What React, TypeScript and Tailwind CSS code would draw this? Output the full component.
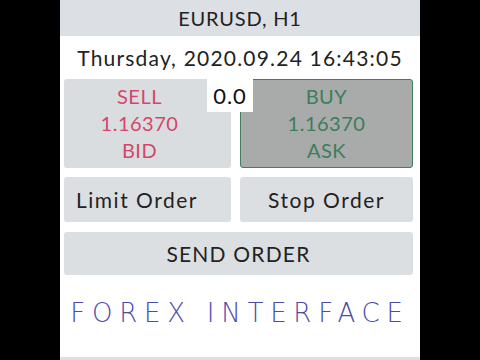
import React from "react";

const font = { fontFamily: "Lato, 'Open Sans', sans-serif" };

function PriceButton({
  side,
  price,
  label,
  className,
}: {
  side: string;
  price: string;
  label: string;
  className: string;
}) {
  return (
    <div
      className={`flex flex-col items-center justify-center rounded-[3px] text-[20px] leading-[27px] tracking-[0.5px] ${className}`}
    >
      <span>{side}</span>
      <span>{price}</span>
      <span>{label}</span>
    </div>
  );
}

export default function App() {
  return (
    <div className="flex h-[360px] w-[480px] justify-center bg-black" style={font}>
      <div className="flex w-[360px] flex-col bg-white text-[#222]">
        <div className="flex h-[36px] items-center justify-center bg-[#dcdfe3] text-[20px] tracking-[0.8px]">
          EURUSD, H1
        </div>
        <div className="flex h-[43px] items-center justify-center text-[21px] tracking-[1.2px]">
          Thursday, 2020.09.24 16:43:05
        </div>

        <div className="relative flex gap-[9px] pl-[4px] pr-[7px]">
          <PriceButton
            side="SELL"
            price="1.16370"
            label="BID"
            className="h-[89px] w-[167px] bg-[#dadde0] pr-[16px] text-[#d2486a]"
          />
          <PriceButton
            side="BUY"
            price="1.16370"
            label="ASK"
            className="h-[89px] w-[173px] border border-[#3f7f60] bg-[#a9aaaa] text-[#3d7d5c]"
          />
          <div className="absolute left-[147px] top-0 flex h-[33px] w-[46px] items-center justify-center bg-white text-[22px] tracking-[1px] text-[#111]">
            0.0
          </div>
        </div>

        <div className="mt-[9px] flex gap-[9px] pl-[4px] pr-[7px] text-[21px] tracking-[1.5px]">
          <div className="flex h-[45px] w-[167px] items-center rounded-[3px] bg-[#dcdfe2] pl-[12px]">
            Limit Order
          </div>
          <div className="flex h-[45px] w-[173px] items-center justify-center rounded-[3px] bg-[#dcdfe2]">
            Stop Order
          </div>
        </div>

        <div className="ml-[4px] mr-[7px] mt-[10px] flex h-[43px] items-center justify-center rounded-[3px] bg-[#dcdfe2] text-[21px] tracking-[1.2px]">
          SEND ORDER
        </div>

        <div className="flex flex-1 items-center justify-center pb-[6px]">
          <span
            className="text-[26px] font-light tracking-[0.26em] text-[#4b4ba8]"
            style={{ fontFamily: "'DejaVu Sans', sans-serif" }}
          >
            FOREX INTERFACE
          </span>
        </div>
        <div className="h-[3px] bg-[#dcdfe3]" />
      </div>
    </div>
  );
}
